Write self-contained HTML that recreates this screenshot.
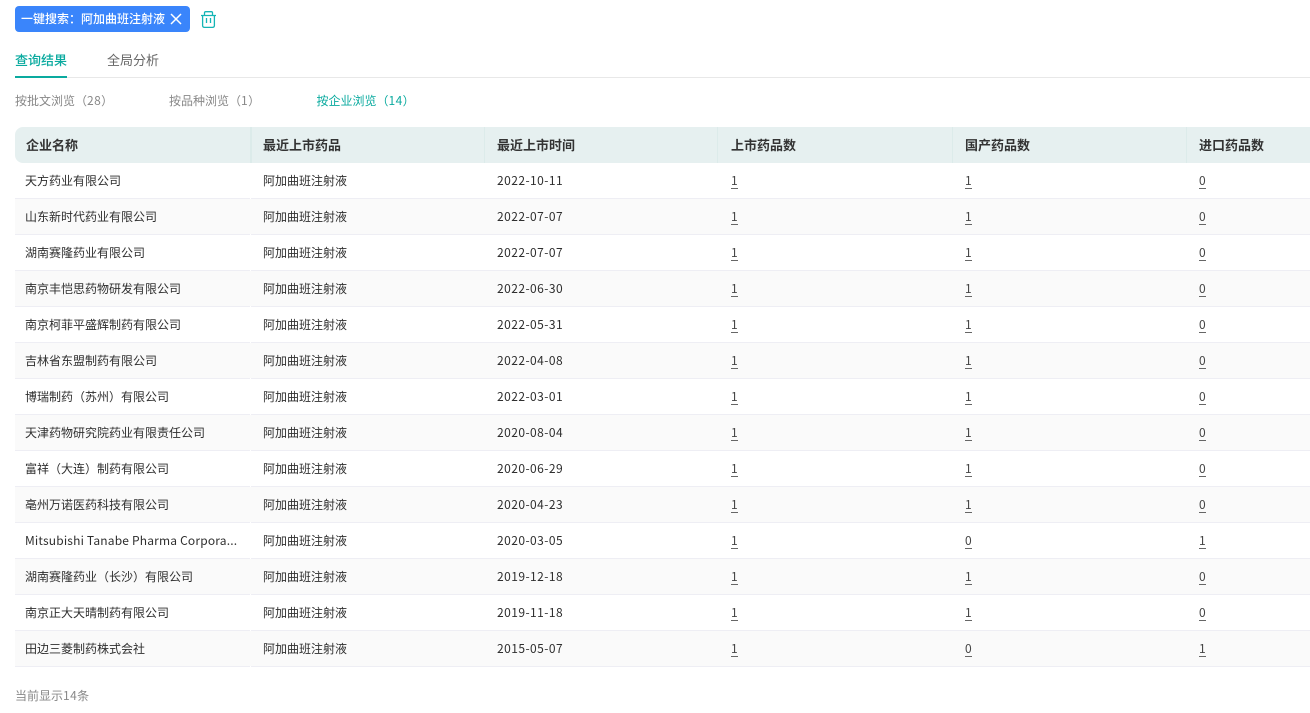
<!DOCTYPE html>
<html lang="zh">
<head>
<meta charset="utf-8">
<style>
html,body{margin:0;padding:0;background:#fff;}
body{width:1310px;height:713px;overflow:hidden;position:relative;font-family:"Liberation Sans","Noto Sans CJK SC",sans-serif;font-size:12px;color:#333;}
.a{position:absolute;white-space:nowrap;}
.cn{font-family:"Noto Sans CJK SC",sans-serif;}
.ls{letter-spacing:.4px;}
.row{position:absolute;left:15px;width:1295px;height:35px;border-bottom:1px solid #eeeef4;}
.row::after{content:"";position:absolute;left:235px;bottom:-1px;width:1px;height:1px;background:#fff;}
.row.alt{background:#fafafa;}
.row span{position:absolute;top:0;line-height:35px;white-space:nowrap;font-family:"Noto Sans CJK SC",sans-serif;color:#2e2e2e;}
.row .d{left:482px;letter-spacing:.45px;}
.row .n{line-height:13px;top:11px;border-bottom:1px solid #666;width:7px;padding-bottom:1px;color:#444;}
.h{position:absolute;top:127px;height:36px;line-height:35px;font-size:13px;font-weight:700;color:#333;font-family:"Noto Sans CJK SC",sans-serif;}
.sep{position:absolute;top:127px;width:1px;height:36px;background:#dcebea;}
</style>
</head>
<body>
<div class="a cn" style="left:15px;top:6px;width:175px;height:26px;background:#3a85fb;border-radius:4px;"></div>
<div class="a cn" style="left:21px;top:6px;line-height:26px;color:#fff;font-size:12px;font-weight:500;">一键搜索：阿加曲班注射液</div>
<svg class="a" style="left:170px;top:13px" width="12" height="12" viewBox="0 0 12 12"><path d="M1 1L11 11M11 1L1 11" stroke="#fff" stroke-width="1.5" fill="none"/></svg>
<svg class="a" style="left:200px;top:10px" width="17" height="19" viewBox="0 0 17 19" fill="none" stroke="#14b5b5" stroke-width="1.3"><path d="M1 5.500H16M4.500 5V2.800Q4.500 1.700 5.700 1.700H11.300Q12.500 1.700 12.500 2.800V5M2.600 5.500V15.500Q2.600 17.400 4.600 17.400H12.400Q14.400 17.400 14.400 15.500V5.500M6.500 8V13M10.500 8V13"/></svg>

<div class="a cn" style="left:15px;top:50px;line-height:20px;font-size:13px;font-weight:500;color:#0aaa9f;">查询结果</div>
<div class="a cn" style="left:107px;top:50px;line-height:20px;font-size:13px;color:#666;">全局分析</div>
<div class="a" style="left:15px;top:77px;width:1295px;height:1px;background:#e8e8e8;"></div>
<div class="a" style="left:15px;top:76px;width:52px;height:2px;background:#0aaa9f;"></div>

<div class="a cn" style="left:15px;top:91px;line-height:20px;color:#888;">按批文浏览（<span class="ls">28</span>）</div>
<div class="a cn" style="left:169px;top:91px;line-height:20px;color:#888;">按品种浏览（<span class="ls">1</span>）</div>
<div class="a cn" style="left:316.500px;top:91px;line-height:20px;color:#0aaa9f;">按企业浏览（<span class="ls">14</span>）</div>

<div class="a" style="left:15px;top:127px;width:1295px;height:36px;background:#e6f0f0;border-radius:8px 0 0 8px;"></div>
<div class="sep" style="left:250px;width:2px"></div>
<div class="sep" style="left:484px"></div>
<div class="sep" style="left:717px"></div>
<div class="sep" style="left:952px"></div>
<div class="sep" style="left:1186px"></div>
<div class="h" style="left:26px">企业名称</div>
<div class="h" style="left:263px">最近上市药品</div>
<div class="h" style="left:497px">最近上市时间</div>
<div class="h" style="left:731px">上市药品数</div>
<div class="h" style="left:965px">国产药品数</div>
<div class="h" style="left:1199px">进口药品数</div>

<div class="row" style="top:163px"><span style="left:10px">天方药业有限公司</span><span style="left:248px">阿加曲班注射液</span><span class="d">2022-10-11</span><span class="n" style="left:716px">1</span><span class="n" style="left:950px">1</span><span class="n" style="left:1184px">0</span></div>
<div class="row alt" style="top:199px"><span style="left:10px">山东新时代药业有限公司</span><span style="left:248px">阿加曲班注射液</span><span class="d">2022-07-07</span><span class="n" style="left:716px">1</span><span class="n" style="left:950px">1</span><span class="n" style="left:1184px">0</span></div>
<div class="row" style="top:235px"><span style="left:10px">湖南赛隆药业有限公司</span><span style="left:248px">阿加曲班注射液</span><span class="d">2022-07-07</span><span class="n" style="left:716px">1</span><span class="n" style="left:950px">1</span><span class="n" style="left:1184px">0</span></div>
<div class="row alt" style="top:271px"><span style="left:10px">南京丰恺思药物研发有限公司</span><span style="left:248px">阿加曲班注射液</span><span class="d">2022-06-30</span><span class="n" style="left:716px">1</span><span class="n" style="left:950px">1</span><span class="n" style="left:1184px">0</span></div>
<div class="row" style="top:307px"><span style="left:10px">南京柯菲平盛辉制药有限公司</span><span style="left:248px">阿加曲班注射液</span><span class="d">2022-05-31</span><span class="n" style="left:716px">1</span><span class="n" style="left:950px">1</span><span class="n" style="left:1184px">0</span></div>
<div class="row alt" style="top:343px"><span style="left:10px">吉林省东盟制药有限公司</span><span style="left:248px">阿加曲班注射液</span><span class="d">2022-04-08</span><span class="n" style="left:716px">1</span><span class="n" style="left:950px">1</span><span class="n" style="left:1184px">0</span></div>
<div class="row" style="top:379px"><span style="left:10px">博瑞制药（苏州）有限公司</span><span style="left:248px">阿加曲班注射液</span><span class="d">2022-03-01</span><span class="n" style="left:716px">1</span><span class="n" style="left:950px">1</span><span class="n" style="left:1184px">0</span></div>
<div class="row alt" style="top:415px"><span style="left:10px">天津药物研究院药业有限责任公司</span><span style="left:248px">阿加曲班注射液</span><span class="d">2020-08-04</span><span class="n" style="left:716px">1</span><span class="n" style="left:950px">1</span><span class="n" style="left:1184px">0</span></div>
<div class="row" style="top:451px"><span style="left:10px">富祥（大连）制药有限公司</span><span style="left:248px">阿加曲班注射液</span><span class="d">2020-06-29</span><span class="n" style="left:716px">1</span><span class="n" style="left:950px">1</span><span class="n" style="left:1184px">0</span></div>
<div class="row alt" style="top:487px"><span style="left:10px">亳州万诺医药科技有限公司</span><span style="left:248px">阿加曲班注射液</span><span class="d">2020-04-23</span><span class="n" style="left:716px">1</span><span class="n" style="left:950px">1</span><span class="n" style="left:1184px">0</span></div>
<div class="row" style="top:523px"><span style="left:10px;letter-spacing:.18px">Mitsubishi Tanabe Pharma Corpora...</span><span style="left:248px">阿加曲班注射液</span><span class="d">2020-03-05</span><span class="n" style="left:716px">1</span><span class="n" style="left:950px">0</span><span class="n" style="left:1184px">1</span></div>
<div class="row alt" style="top:559px"><span style="left:10px">湖南赛隆药业（长沙）有限公司</span><span style="left:248px">阿加曲班注射液</span><span class="d">2019-12-18</span><span class="n" style="left:716px">1</span><span class="n" style="left:950px">1</span><span class="n" style="left:1184px">0</span></div>
<div class="row" style="top:595px"><span style="left:10px">南京正大天晴制药有限公司</span><span style="left:248px">阿加曲班注射液</span><span class="d">2019-11-18</span><span class="n" style="left:716px">1</span><span class="n" style="left:950px">1</span><span class="n" style="left:1184px">0</span></div>
<div class="row alt" style="top:631px"><span style="left:10px">田边三菱制药株式会社</span><span style="left:248px">阿加曲班注射液</span><span class="d">2015-05-07</span><span class="n" style="left:716px">1</span><span class="n" style="left:950px">0</span><span class="n" style="left:1184px">1</span></div>

<div class="a cn" style="left:15px;top:686px;line-height:20px;color:#888;">当前显示<span class="ls">14</span>条</div>
</body>
</html>
